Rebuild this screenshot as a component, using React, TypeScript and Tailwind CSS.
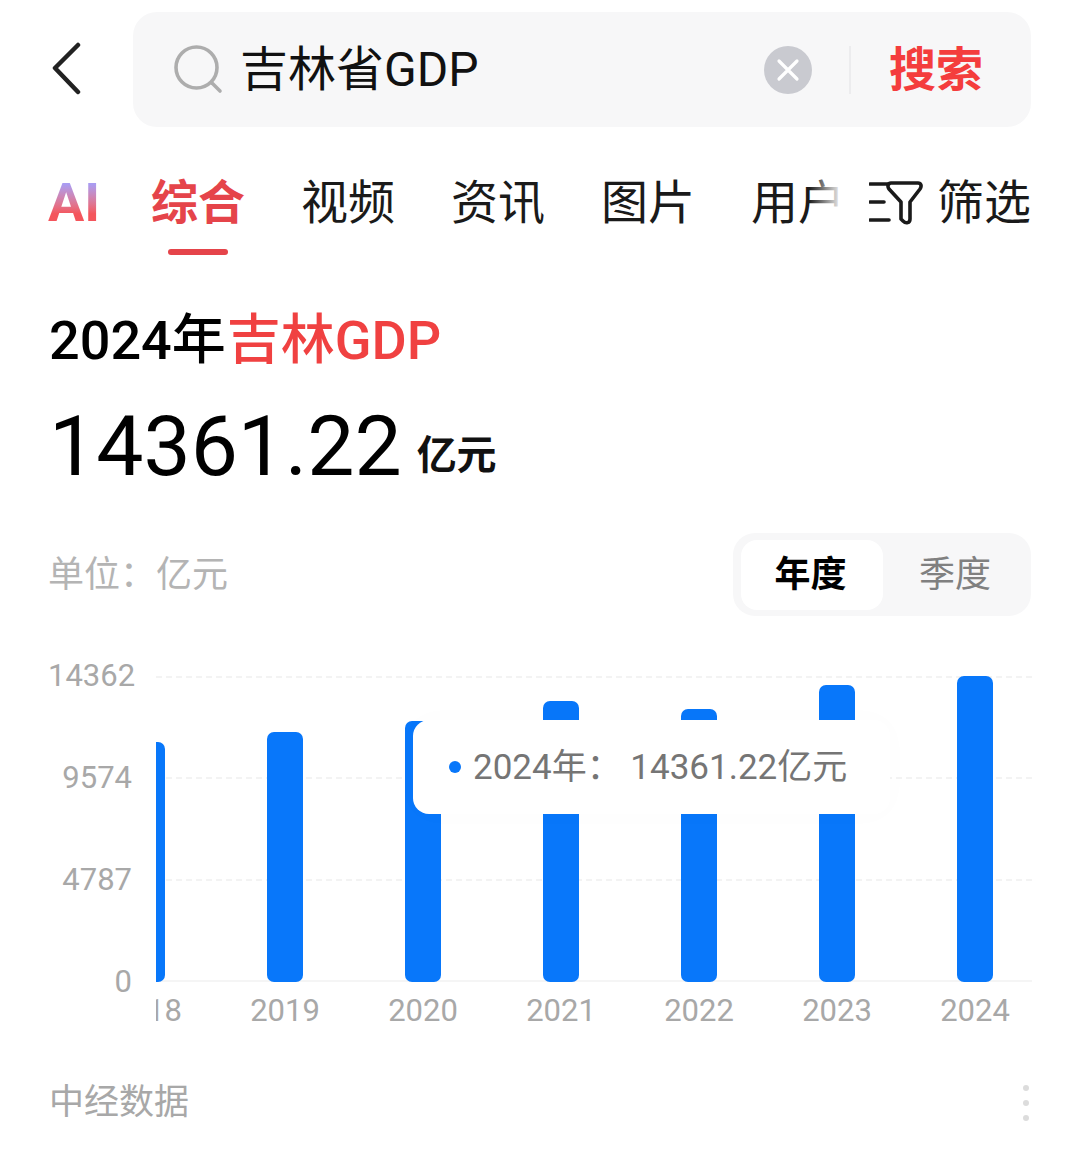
import React from 'react';

const tabs = ['视频', '资讯', '图片'];
const yLabels = ['14362', '9574', '4787', '0'];

// bar tops are read from the chart: px height above the baseline
const years = [
  { year: '2018', height: 240 },
  { year: '2019', height: 250 },
  { year: '2020', height: 261 },
  { year: '2021', height: 281 },
  { year: '2022', height: 273 },
  { year: '2023', height: 297 },
  { year: '2024', height: 306 },
];

const BackIcon = () => (
  <svg width="32" height="54" viewBox="0 0 32 54" fill="none" className="shrink-0">
    <path d="M28 3 L5 26 L28 50" stroke="#222" strokeWidth="4.5" strokeLinecap="round" strokeLinejoin="round" />
  </svg>
);

const SearchIcon = () => (
  <svg width="50" height="50" viewBox="0 0 50 50" fill="none" className="shrink-0">
    <circle cx="22.5" cy="22.5" r="20.5" stroke="#adadad" strokeWidth="3.6" />
    <path d="M38 38 L46 46" stroke="#adadad" strokeWidth="3.6" strokeLinecap="round" />
  </svg>
);

const FilterIcon = () => (
  <svg width="54" height="46" viewBox="0 0 54 46" fill="none" className="shrink-0">
    <path d="M1 4 H20 M1 22 H15 M1 40 H20" stroke="#1a1a1a" strokeWidth="3.6" strokeLinecap="round" />
    <path
      d="M22 3 H49 C52 3 53 6 51 9 L41 22 V39 C41 43 37 44 34 41 L32 39 V22 L20 9 C18 6 19 3 22 3 Z"
      stroke="#1a1a1a"
      strokeWidth="3.6"
      strokeLinejoin="round"
    />
  </svg>
);

export default function App() {
  return (
    <div className="h-[1150px] w-[1080px] overflow-hidden bg-white font-['Roboto','Noto_Sans_CJK_SC',sans-serif] text-black">
      {/* Search bar */}
      <div className="flex items-start pt-3 pl-[50px] pr-[49px]">
        <div className="mt-[30px] w-[83px]">
          <BackIcon />
        </div>
        <div className="flex h-[115px] flex-1 items-center rounded-[24px] bg-[#f7f7f8] pl-[41px]">
          <SearchIcon />
          <span className="ml-[16px] text-[48px] leading-none text-[#111]">吉林省GDP</span>
          <div className="ml-auto flex h-12 w-12 items-center justify-center rounded-full bg-[#c9cad0]">
            <svg width="24" height="24" viewBox="0 0 24 24" fill="none">
              <path d="M3 3 L21 21 M21 3 L3 21" stroke="#fff" strokeWidth="3.2" strokeLinecap="round" />
            </svg>
          </div>
          <div className="ml-[37px] h-12 w-[2px] bg-[#ececee]" />
          <span className="ml-[38px] mr-[48px] text-[47px] font-bold leading-none text-[#f43d3d]">搜索</span>
        </div>
      </div>

      {/* Tabs */}
      <div className="mt-[49px] flex items-start pl-12 pr-[49px]">
        <span className="w-[103px] bg-gradient-to-b from-[#a99cf2] from-15% to-[#f4555c] to-70% bg-clip-text text-[54px] font-bold leading-[54px] text-transparent">
          AI
        </span>
        <div className="flex w-[94px] flex-col items-center">
          <span className="text-[47px] font-bold leading-[54px] text-[#e5444a]">综合</span>
          <div className="mt-[19px] h-[6px] w-[60px] rounded-full bg-[#e5444a]" />
        </div>
        {tabs.map(tab => (
          <span key={tab} className="ml-[56px] text-[47px] leading-[54px] text-[#1a1a1a]">
            {tab}
          </span>
        ))}
        <div className="relative ml-[56px] w-[92px] overflow-hidden">
          <span className="text-[47px] leading-[54px] whitespace-nowrap text-[#1a1a1a]">用户</span>
          <div className="absolute inset-y-0 right-0 w-[34px] bg-gradient-to-r from-white/0 to-white" />
        </div>
        <div className="ml-auto flex h-[54px] items-center">
          <FilterIcon />
          <span className="ml-[14px] text-[47px] leading-[54px] text-[#1a1a1a]">筛选</span>
        </div>
      </div>

      {/* Headline */}
      <div className="mt-[56px] pl-[49px] text-[54px] font-medium leading-[60px]">
        2024年<span className="ml-[1px] text-[#f04141]">吉林GDP</span>
      </div>
      <div className="mt-[27px] flex items-end pl-[49px]">
        <span className="text-[84px] leading-[98px]">14361.22</span>
        <span className="mb-[16px] ml-[15px] text-[40px] font-semibold leading-[48px] text-[#111]">亿元</span>
      </div>

      {/* Unit and period switch */}
      <div className="mt-[37px] flex items-center justify-between pl-[48px] pr-[49px]">
        <span className="text-[36px] text-[#b4b4b4]">单位：亿元</span>
        <div className="flex h-[83px] w-[298px] items-center rounded-[22px] bg-[#f7f7f8] pl-[8px]">
          <div className="flex h-[70px] w-[142px] items-center justify-center rounded-[16px] bg-white pr-[3px] text-[36px] font-bold">
            年度
          </div>
          <div className="flex flex-1 items-center justify-center pr-[4px] text-[36px] text-[#808080]">季度</div>
        </div>
      </div>

      {/* Chart */}
      <div className="mt-[43px] flex items-start pl-[48px] pr-[48px]">
        <div className="flex h-[340px] w-[84px] flex-col justify-between text-right text-[31px] leading-[34px] text-[#a8a8a8]">
          {yLabels.map(label => (
            <span key={label}>{label}</span>
          ))}
        </div>
        <div className="ml-[24px] mt-[17px] w-[876px]">
          <div className="relative h-[306px]">
            <div className="absolute inset-0 flex flex-col justify-between">
              <div className="border-t-2 border-dashed border-[#f3f3f3]" />
              <div className="border-t-2 border-dashed border-[#f3f3f3]" />
              <div className="border-t-2 border-dashed border-[#f3f3f3]" />
              <div className="border-t-2 border-[#f5f5f5]" />
            </div>
            <div className="relative h-full overflow-hidden">
              <div className="ml-[-78px] flex h-full items-end">
                {years.map(item => (
                  <div key={item.year} className="flex w-[138px] shrink-0 justify-center">
                    <div className="w-9 rounded-[7px] bg-[#0877fa]" style={{ height: item.height }} />
                  </div>
                ))}
              </div>
            </div>
            {/* Tooltip */}
            <div className="absolute left-[257px] top-[44px] flex h-[94px] w-[477px] items-center rounded-[16px] bg-white pl-[36px] shadow-[0_0_30px_rgba(0,0,0,0.015)]">
              <span className="h-3 w-3 rounded-full bg-[#0877fa]" />
              <span className="ml-3 text-[35px] leading-none whitespace-nowrap text-[#757575]">
                2024年： 14361.22亿元
              </span>
            </div>
          </div>
          <div className="mt-[10px] overflow-hidden">
            <div className="ml-[-78px] flex text-[31px] leading-[38px] text-[#a8a8a8]">
              {years.map(item => (
                <div key={item.year} className="w-[138px] shrink-0 text-center">
                  {item.year}
                </div>
              ))}
            </div>
          </div>
        </div>
      </div>

      {/* Source */}
      <div className="mt-[51px] flex items-center justify-between pl-[49px] pr-[51px]">
        <span className="text-[35px] leading-[44px] text-[#a8a8a8]">中经数据</span>
        <div className="flex flex-col gap-[9px]">
          <span className="h-[6px] w-[6px] rounded-full bg-[#dcdcdc]" />
          <span className="h-[6px] w-[6px] rounded-full bg-[#dcdcdc]" />
          <span className="h-[6px] w-[6px] rounded-full bg-[#dcdcdc]" />
        </div>
      </div>
    </div>
  );
}
